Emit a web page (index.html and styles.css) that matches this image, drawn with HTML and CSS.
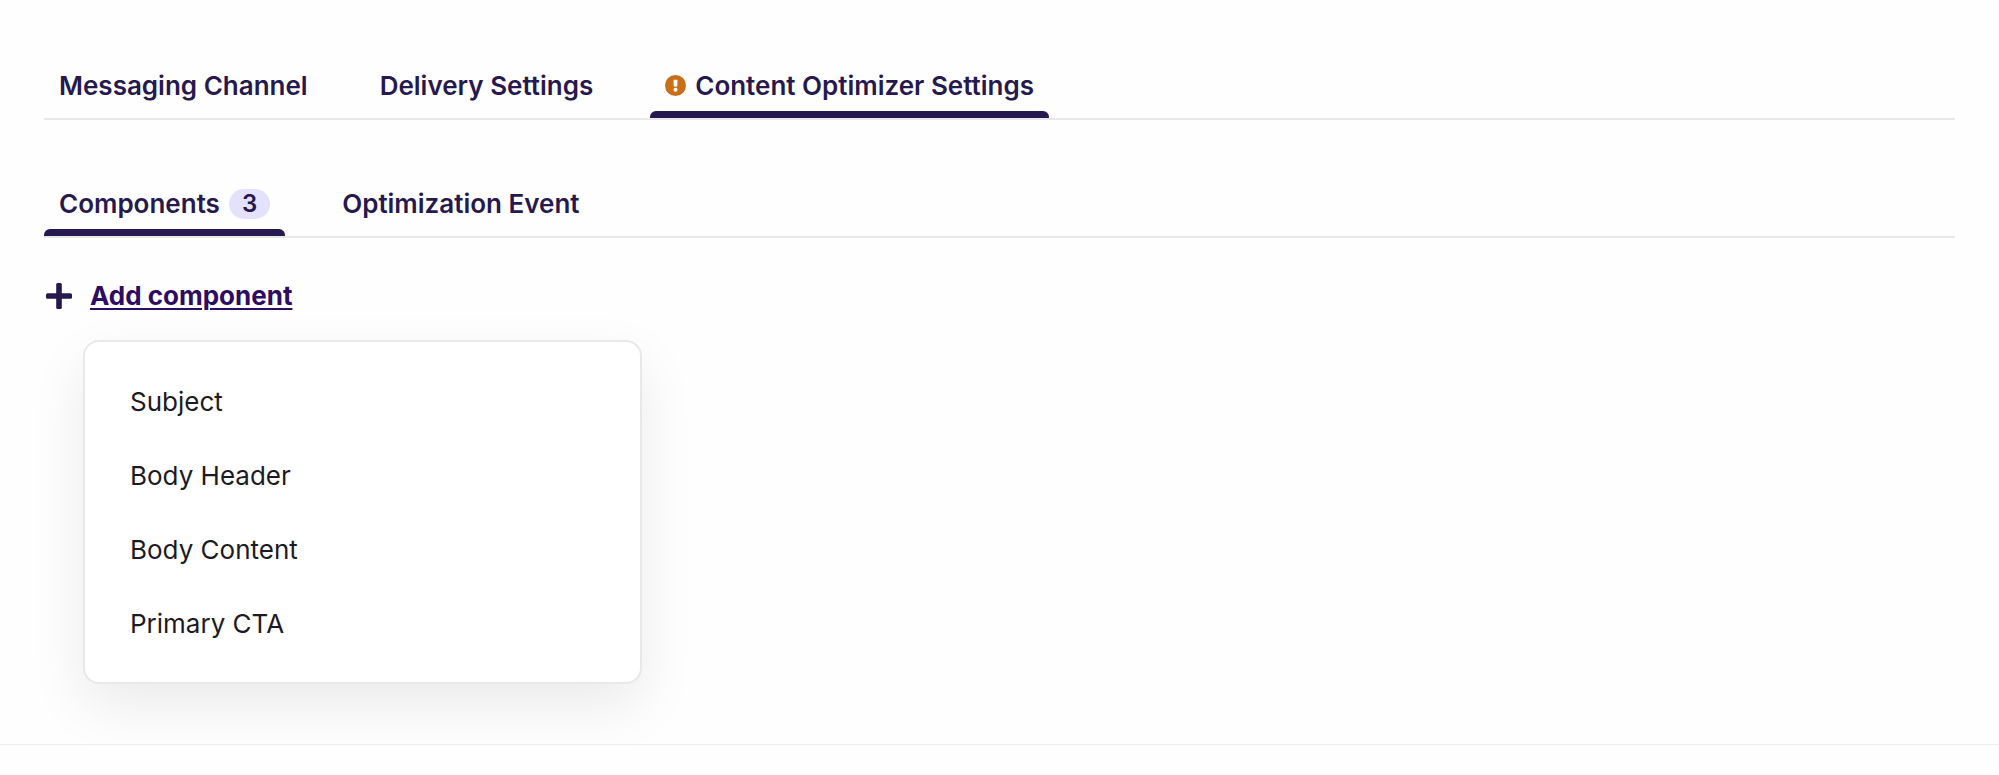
FILE: index.html
```
<!DOCTYPE html>
<html lang="en">
<head>
<meta charset="utf-8">
<title>Content Optimizer Settings</title>
<link rel="stylesheet" href="styles.css">
</head>
<body>
<main class="panel">
  <div class="tabs" role="tablist" aria-label="Campaign settings">
    <button class="tab" type="button" role="tab" aria-selected="false">Messaging Channel</button>
    <button class="tab" type="button" role="tab" aria-selected="false">Delivery Settings</button>
    <button class="tab tab-active" type="button" role="tab" aria-selected="true">
      <svg class="warning-icon" viewBox="0 0 21 21" aria-hidden="true">
        <circle cx="10.500" cy="10.500" r="10.500" fill="#c96f18"/>
        <path d="M8.900 5.200h3.200l-.2 6H9.100z" fill="#fff" stroke="#fff" stroke-width=".8" stroke-linejoin="round"/>
        <circle cx="10.500" cy="14.800" r="2" fill="#fff"/>
      </svg>
      Content Optimizer Settings
    </button>
  </div>
  <div class="tabs tabs-inner" role="tablist" aria-label="Optimizer settings">
    <button class="tab tab-active" type="button" role="tab" aria-selected="true">Components <span class="badge">3</span></button>
    <button class="tab" type="button" role="tab" aria-selected="false">Optimization Event</button>
  </div>
  <div class="add">
    <svg class="plus-icon" viewBox="0 0 26 26" aria-hidden="true">
      <path d="M13 2v22M2 13h22" fill="none" stroke="#26194f" stroke-width="3" stroke-linecap="square" stroke-linejoin="round"/>
      <rect x="10.200" y="0" width="5.600" height="26" rx="1.500" fill="#26194f"/>
      <rect x="0" y="10.200" width="26" height="5.600" rx="1.500" fill="#26194f"/>
    </svg>
    <a class="add-link" href="#components">Add component</a>
  </div>
  <div class="menu" id="components" role="menu">
    <button class="menu-item" type="button" role="menuitem">Subject</button>
    <button class="menu-item" type="button" role="menuitem">Body Header</button>
    <button class="menu-item" type="button" role="menuitem">Body Content</button>
    <button class="menu-item" type="button" role="menuitem">Primary CTA</button>
  </div>
</main>
</body>
</html>
```
FILE: styles.css
```
* {
  box-sizing: border-box;
}

body {
  margin: 0;
  background: #fefefe;
  color: #1c1a24;
  font-family: Inter, "Liberation Sans", sans-serif;
  font-size: 26px;
  line-height: 32px;
}

button {
  border: 0;
  background: none;
  color: inherit;
  font: inherit;
  text-align: left;
  cursor: pointer;
}

.panel {
  padding: 56px 44px 60px;
  border-bottom: 1px solid #eeeeee;
}

.tabs {
  display: flex;
  gap: 42px;
  margin-bottom: 54px;
  border-bottom: 2px solid #e8e8e8;
}

.tabs-inner {
  margin-bottom: 42px;
}

.tab {
  position: relative;
  display: flex;
  align-items: center;
  gap: 9px;
  height: 62px;
  padding: 8px 15px 11px;
  color: #26194f;
  font-weight: 600;
  white-space: nowrap;
}

.tab-active::after {
  content: "";
  position: absolute;
  right: 0;
  bottom: 0;
  left: 0;
  height: 7px;
  border-radius: 6px 6px 0 0;
  background: #26194f;
}

.warning-icon {
  width: 21px;
  height: 21px;
}

.badge {
  padding: 0 13px;
  border-radius: 15px;
  background: #e3e1fb;
  font-size: 24px;
  line-height: 30px;
}

.add {
  display: flex;
  align-items: center;
  gap: 18px;
  margin: 0 2px 28px;
}

.plus-icon {
  width: 26px;
  height: 26px;
}

.add-link {
  color: #2d0c63;
  font-weight: 700;
  text-decoration-thickness: 2px;
  text-underline-offset: 3px;
}

.menu {
  width: 559px;
  max-width: 100%;
  margin-left: 39px;
  padding: 23px 0 21px;
  border: 2px solid #e8e8e8;
  border-radius: 16px;
  background: #ffffff;
  box-shadow: 0 22px 56px rgba(0, 0, 0, 0.08);
}

.menu-item {
  display: block;
  width: 100%;
  height: 74px;
  padding: 0 45px;
}
```
